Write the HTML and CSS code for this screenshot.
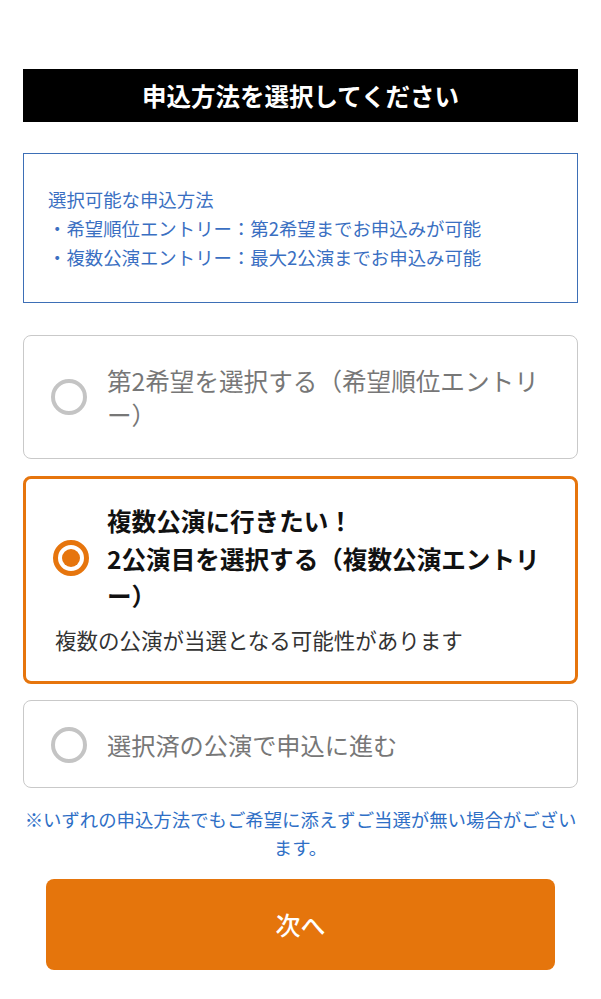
FILE: index.html
```html
<!DOCTYPE html>
<html>
  <head>
    <title>申込方法を選択してください</title>
    <link rel="stylesheet" href="styles.css">
  </head>
  <body>
    <div class="container">
      <h1 class="heading">申込方法を選択してください</h1>

      <div class="info">
        <p>選択可能な申込方法</p>
        <p>・希望順位エントリー：第2希望までお申込みが可能</p>
        <p>・複数公演エントリー：最大2公演までお申込み可能</p>
      </div>

      <label class="option">
        <span class="option-row">
          <span class="radio"></span>
          <span class="option-text">第2希望を選択する（希望順位エントリー）</span>
        </span>
      </label>

      <label class="option option-selected">
        <span class="option-row">
          <span class="radio radio-on"></span>
          <span class="option-text">複数公演に行きたい！<br>2公演目を選択する（複数公演エントリー）</span>
        </span>
        <span class="option-sub">複数の公演が当選となる可能性があります</span>
      </label>

      <label class="option option-last">
        <span class="option-row">
          <span class="radio"></span>
          <span class="option-text">選択済の公演で申込に進む</span>
        </span>
      </label>

      <p class="note">※いずれの申込方法でもご希望に添えずご当選が無い場合がございます。</p>

      <button type="button" class="next">次へ</button>
    </div>
  </body>
</html>
```

FILE: styles.css
```css
body {
  margin: 0;
  background-color: #fff;
  font-family: "Noto Sans CJK JP", "Noto Sans", sans-serif;
  color: #222;
}

p {
  margin: 0;
}

.container {
  padding: 69px 23px 29px 23px;
  display: flex;
  flex-direction: column;
}

.heading {
  margin: 0;
  height: 53px;
  background-color: #000;
  color: #fff;
  font-size: 24.5px;
  font-weight: bold;
  display: flex;
  justify-content: center;
  align-items: center;
}

.info {
  margin-top: 31px;
  border: 1px solid #3d6fb6;
  padding: 31px 24px 30px 24px;
  color: #3a6fc2;
  font-size: 18.4px;
  line-height: 29px;
}

.option {
  display: flex;
  flex-direction: column;
  margin-top: 32px;
  padding: 27px 27px 27px 27px;
  border: 1px solid #c9c9c9;
  border-radius: 8px;
}

.option-row {
  display: flex;
  align-items: center;
}

.option-text {
  flex: 1;
  margin-left: 20px;
  font-size: 24.6px;
  line-height: 34px;
  color: #777;
}

.radio {
  flex: none;
  width: 36px;
  height: 36px;
  box-sizing: border-box;
  border: 4px solid #c4c4c4;
  border-radius: 50%;
}

.radio-on {
  border: 5px solid #e6750d;
  display: flex;
  justify-content: center;
  align-items: center;
}

.radio-on::after {
  content: "";
  width: 18px;
  height: 18px;
  border-radius: 50%;
  background-color: #e6750d;
}

.option-selected {
  margin-top: 17px;
  padding: 23px 27px 27px 27px;
  border: 3px solid #e6750d;
}

.option-selected .option-text {
  margin-left: 18px;
  font-weight: bold;
  line-height: 37.5px;
  color: #111;
}

.option-sub {
  margin-top: 11px;
  margin-left: 2px;
  font-size: 21.5px;
  line-height: 28px;
  color: #333;
}

.option-last {
  margin-top: 16px;
  padding-top: 26px;
  padding-bottom: 24px;
}

.option-last .option-text {
  font-size: 24.2px;
}

.note {
  margin-top: 17px;
  text-align: center;
  font-size: 18.4px;
  line-height: 28px;
  color: #2f6fc6;
}

.next {
  margin: 18px 23px 0 23px;
  height: 91px;
  border: none;
  border-radius: 8px;
  background-color: #e5750c;
  color: #fff;
  font-family: inherit;
  font-size: 25px;
  font-weight: 500;
}
```
